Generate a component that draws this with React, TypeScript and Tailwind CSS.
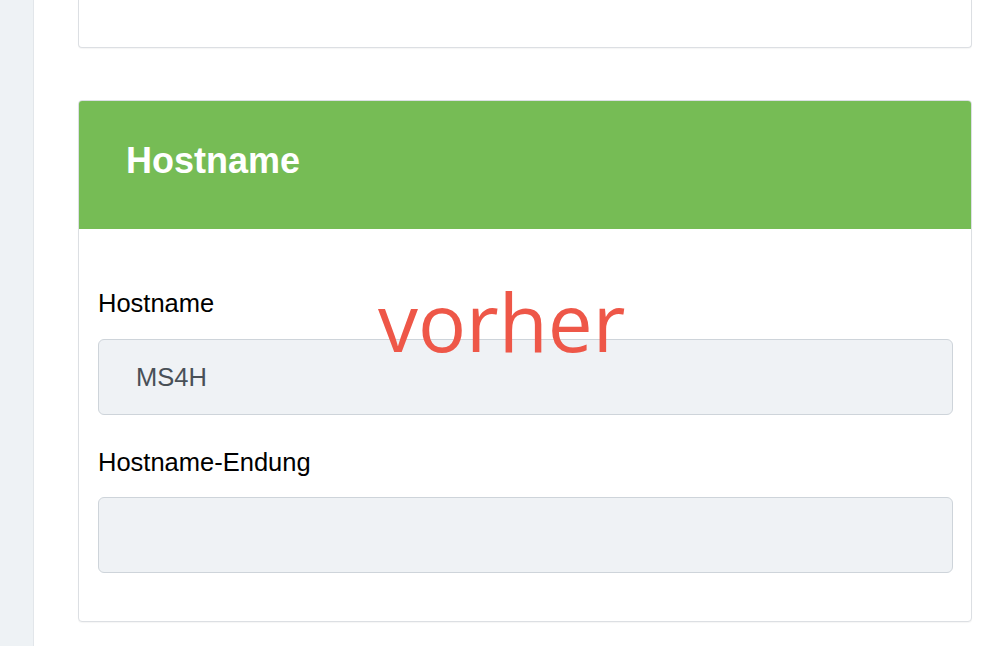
export default function App() {
  return (
    <div className="flex h-[646px] w-full overflow-hidden bg-white font-['Liberation_Sans',Arial,sans-serif]">
      {/* Sidebar */}
      <aside className="h-full w-[34px] shrink-0 border-r border-[#e2e6ea] bg-[#eef2f5]" />

      {/* Main */}
      <main className="flex-1 pl-[44px] pr-[30px]">
        {/* Previous card (cut off above) */}
        <div className="h-[48px] rounded-b-[4px] border-x border-b border-[#dcdfe3] bg-white shadow-[0_1px_1px_rgba(0,0,0,0.04)]" />

        {/* Hostname card */}
        <section className="relative mt-[52px] rounded-[4px] border border-[#dcdfe3] bg-white shadow-[0_1px_1px_rgba(0,0,0,0.04)]">
          <div className="flex h-[128px] items-center rounded-t-[3px] bg-[#76bc55] pb-[8px] pl-[47px]">
            <h2 className="text-[36px] font-bold leading-none text-white">Hostname</h2>
          </div>

          <div className="pb-[48px] pl-[19px] pr-[18px] pt-[56px]">
            <label className="mb-[17px] block text-[25.5px] leading-[37px] text-black">Hostname</label>
            <div className="flex h-[76px] items-center rounded-[6px] border border-[#ced4da] bg-[#eff2f5] pl-[37px] text-[25.5px] text-[#495057]">
              MS4H
            </div>

            <label className="mb-[16px] mt-[29px] block text-[25.5px] leading-[37px] text-black">Hostname-Endung</label>
            <div className="h-[76px] rounded-[6px] border border-[#ced4da] bg-[#eff2f5]" />
          </div>

          {/* Annotation overlay */}
          <span className="absolute left-[299px] top-[180px] font-['Open_Sans',sans-serif] text-[80px] leading-none text-[#ee5748]">
            vorher
          </span>
        </section>
      </main>
    </div>
  );
}
